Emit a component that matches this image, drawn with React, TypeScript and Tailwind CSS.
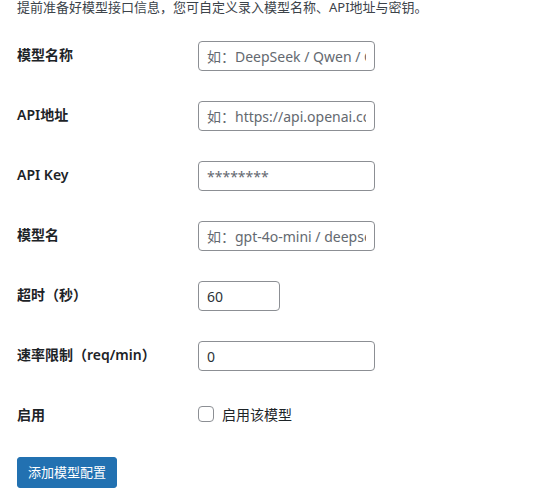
import React from "react";

const font = { fontFamily: '"Noto Sans", "Noto Sans CJK SC", sans-serif' };

function Row({ label, children, tall = true }: { label: string; children: React.ReactNode; tall?: boolean }) {
  return (
    <div className="grid grid-cols-[181px_1fr]">
      <div className="pt-[20px] pb-[20px] text-[14px] leading-[18px] font-semibold text-[#1d2327]">{label}</div>
      <div className={tall ? "py-[15px]" : "pt-[13px] pb-[15px]"}>{children}</div>
    </div>
  );
}

function TextInput({ placeholder, value, w = "w-[177px]" }: { placeholder?: string; value?: string; w?: string }) {
  return (
    <input
      type="text"
      readOnly
      placeholder={placeholder}
      defaultValue={value}
      style={font}
      className={`${w} h-[30px] rounded-[4px] border border-[#8c8f94] bg-white px-[8px] text-[14px] leading-[28px] text-[#2c3338] placeholder:text-[#646970] outline-none block`}
    />
  );
}

export default function App() {
  return (
    <div className="w-[534px] h-[496px] bg-white overflow-hidden px-[17px]" style={font}>
      <p className="mt-[-3px] h-[20px] text-[13px] leading-[20px] text-[#3c434a] whitespace-nowrap">
        提前准备好模型接口信息，您可自定义录入模型名称、API地址与密钥。
      </p>
      <div className="mt-[9px]">
        <Row label="模型名称">
          <TextInput placeholder="如：DeepSeek / Qwen / Claude" />
        </Row>
        <Row label="API地址">
          <TextInput placeholder="如：https://api.openai.com/v1" />
        </Row>
        <Row label="API Key">
          <TextInput placeholder="********" />
        </Row>
        <Row label="模型名">
          <TextInput placeholder="如：gpt-4o-mini / deepseek-chat" />
        </Row>
        <Row label="超时（秒）">
          <TextInput value="60" w="w-[82px]" />
        </Row>
        <Row label="速率限制（req/min）">
          <TextInput value="0" />
        </Row>
        <Row label="启用" tall={false}>
          <label className="flex items-center h-[30px] text-[14px] text-[#1d2327]">
            <span className="w-[16px] h-[16px] rounded-[4px] border border-[#8c8f94] bg-white mr-[8px] shrink-0" />
            启用该模型
          </label>
        </Row>
      </div>
      <div className="mt-[13px]">
        <button
          type="button"
          style={font}
          className="h-[31px] px-[10px] rounded-[3px] bg-[#2271b1] border border-[#2271b1] text-white text-[13px] leading-[29px]"
        >
          添加模型配置
        </button>
      </div>
    </div>
  );
}
